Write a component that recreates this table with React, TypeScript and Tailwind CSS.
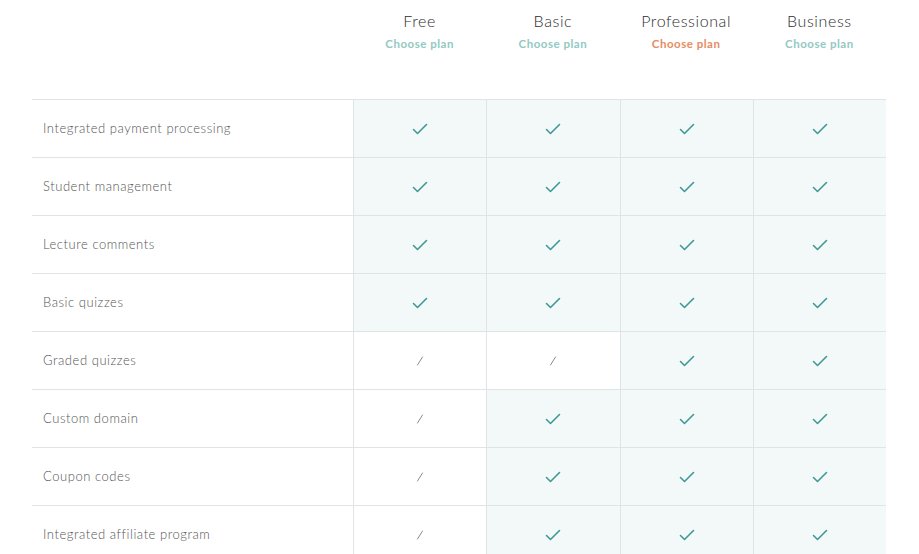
const plans = [
  { name: "Free", accent: false },
  { name: "Basic", accent: false },
  { name: "Professional", accent: true },
  { name: "Business", accent: false },
];

// true = included, false = not included
const features: [string, boolean[]][] = [
  ["Integrated payment processing", [true, true, true, true]],
  ["Student management", [true, true, true, true]],
  ["Lecture comments", [true, true, true, true]],
  ["Basic quizzes", [true, true, true, true]],
  ["Graded quizzes", [false, false, true, true]],
  ["Custom domain", [false, true, true, true]],
  ["Coupon codes", [false, true, true, true]],
  ["Integrated affiliate program", [false, true, true, true]],
];

const Check = () => (
  <svg width="16" height="12" viewBox="0 0 16 12" fill="none">
    <path
      d="M1.5 6.5 L5.5 10.5 L14.5 1.5"
      stroke="#3f9a96"
      strokeWidth="1.6"
      strokeLinecap="round"
      strokeLinejoin="round"
    />
  </svg>
);

const Dash = () => (
  <svg width="8" height="10" viewBox="0 0 8 10" fill="none">
    <path d="M6.5 1 L1.5 9" stroke="#8a8a8a" strokeWidth="1" strokeLinecap="round" />
  </svg>
);

export default function App() {
  return (
    <div className="min-h-screen w-[919px] h-[554px] overflow-hidden bg-white font-['Lato','Noto_Sans',sans-serif]">
      <div className="ml-8 w-[854px]">
        <div className="grid grid-cols-[321px_1fr_1fr_1fr_1fr] h-[99px]">
          <div />
          {plans.map((p) => (
            <div key={p.name} className="flex flex-col items-center pt-[11px]">
              <span className="text-[16px] leading-5 font-light tracking-[0.6px] text-[#2d2d2d]">
                {p.name}
              </span>
              <span
                className={`mt-[5px] text-[11.5px] leading-4 font-bold tracking-[0.5px] ${
                  p.accent ? "text-[#e58c64]" : "text-[#93c9c3]"
                }`}
              >
                Choose plan
              </span>
            </div>
          ))}
        </div>
        <div className="border-t border-[#e1e4e4]">
          {features.map(([label, vals]) => (
            <div
              key={label}
              className="grid grid-cols-[321px_1fr_1fr_1fr_1fr] h-[58px] border-b border-[#e1e4e4]"
            >
              <div className="flex items-center pl-[11px] text-[13px] font-light tracking-[0.55px] text-[#555]">
                {label}
              </div>
              {vals.map((v, i) => (
                <div
                  key={i}
                  className={`flex items-center justify-center border-l border-[#e1e4e4] ${
                    v ? "bg-[#f3f9f9]" : "bg-white"
                  }`}
                >
                  {v ? <Check /> : <Dash />}
                </div>
              ))}
            </div>
          ))}
        </div>
      </div>
    </div>
  );
}
